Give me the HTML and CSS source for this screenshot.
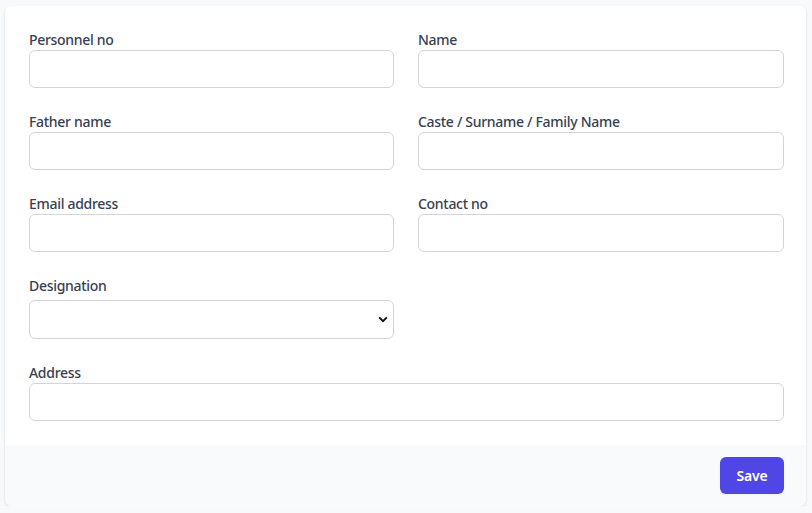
FILE: index.html
```html
<!DOCTYPE html>
<html lang="en">
<head>
<meta charset="utf-8">
<title>Personnel form</title>
<link rel="stylesheet" href="styles.css">
</head>
<body>
<form class="card">
  <div class="body">
    <div class="grid">
      <div class="field">
        <label class="label" for="pno">Personnel no</label>
        <input class="input" id="pno" type="text">
      </div>
      <div class="field">
        <label class="label" for="name">Name</label>
        <input class="input" id="name" type="text">
      </div>
      <div class="field">
        <label class="label" for="father">Father name</label>
        <input class="input" id="father" type="text">
      </div>
      <div class="field">
        <label class="label" for="caste">Caste / Surname / Family Name</label>
        <input class="input" id="caste" type="text">
      </div>
      <div class="field">
        <label class="label" for="email">Email address</label>
        <input class="input" id="email" type="text">
      </div>
      <div class="field">
        <label class="label" for="contact">Contact no</label>
        <input class="input" id="contact" type="text">
      </div>
      <div class="field">
        <label class="label" for="desig">Designation</label>
        <div class="select-wrap">
          <select class="select" id="desig"><option></option></select>
          <svg class="chevron" width="10" height="7" viewBox="0 0 10 7" aria-hidden="true"><path d="M1.2 1.4 L5 5.2 L8.8 1.4" fill="none" stroke="#111" stroke-width="2"/></svg>
        </div>
      </div>
      <div class="field"></div>
      <div class="field wide">
        <label class="label" for="addr">Address</label>
        <input class="input" id="addr" type="text">
      </div>
    </div>
  </div>
  <div class="footer">
    <button class="btn" type="button">Save</button>
  </div>
</form>
</body>
</html>
```
FILE: styles.css
```css
html, body {
  margin: 0;
  padding: 0;
  background: #f8f9fb;
  font-family: "Noto Sans", "Open Sans", "Liberation Sans", sans-serif;
}
.card {
  margin: 6px 0 0 5px;
  width: 801px;
  background: #ffffff;
  border-radius: 6px;
  box-shadow: 0 1px 3px rgba(0,0,0,0.10), 0 1px 2px rgba(0,0,0,0.06);
  overflow: hidden;
}
.body {
  padding: 24px 22px 24px 24px;
}
.grid {
  display: grid;
  grid-template-columns: 365px 366px;
  column-gap: 24px;
  row-gap: 24px;
}
.field {
  display: flex;
  flex-direction: column;
}
.wide {
  grid-column: 1 / 3;
}
.label {
  display: block;
  font-size: 14px;
  line-height: 20px;
  font-weight: 500;
  letter-spacing: -0.3px;
  color: #374151;
}
.input {
  box-sizing: border-box;
  height: 38px;
  width: 100%;
  margin: 0;
  border: 1px solid #d1d5db;
  border-radius: 6px;
  background: #fff;
  font: inherit;
  font-size: 14px;
  padding: 0 12px;
}
.select-wrap {
  position: relative;
  margin-top: 4px;
}
.select {
  box-sizing: border-box;
  display: block;
  height: 39px;
  width: 100%;
  margin: 0;
  border: 1px solid #d1d5db;
  border-radius: 6px;
  background: #fff;
  appearance: none;
  -webkit-appearance: none;
  font: inherit;
  font-size: 14px;
  padding: 0 12px;
}
.chevron {
  position: absolute;
  right: 6px;
  top: 16px;
  pointer-events: none;
}
.footer {
  background: #f9fafb;
  padding: 12px 22px 12px 24px;
  display: flex;
  justify-content: flex-end;
}
.btn {
  width: 64px;
  height: 37px;
  border: 0;
  border-radius: 6px;
  background: #4f46e5;
  color: #fff;
  font: inherit;
  font-size: 14px;
  font-weight: 600;
  letter-spacing: -0.2px;
  box-shadow: 0 1px 2px rgba(0,0,0,0.05);
}
```
